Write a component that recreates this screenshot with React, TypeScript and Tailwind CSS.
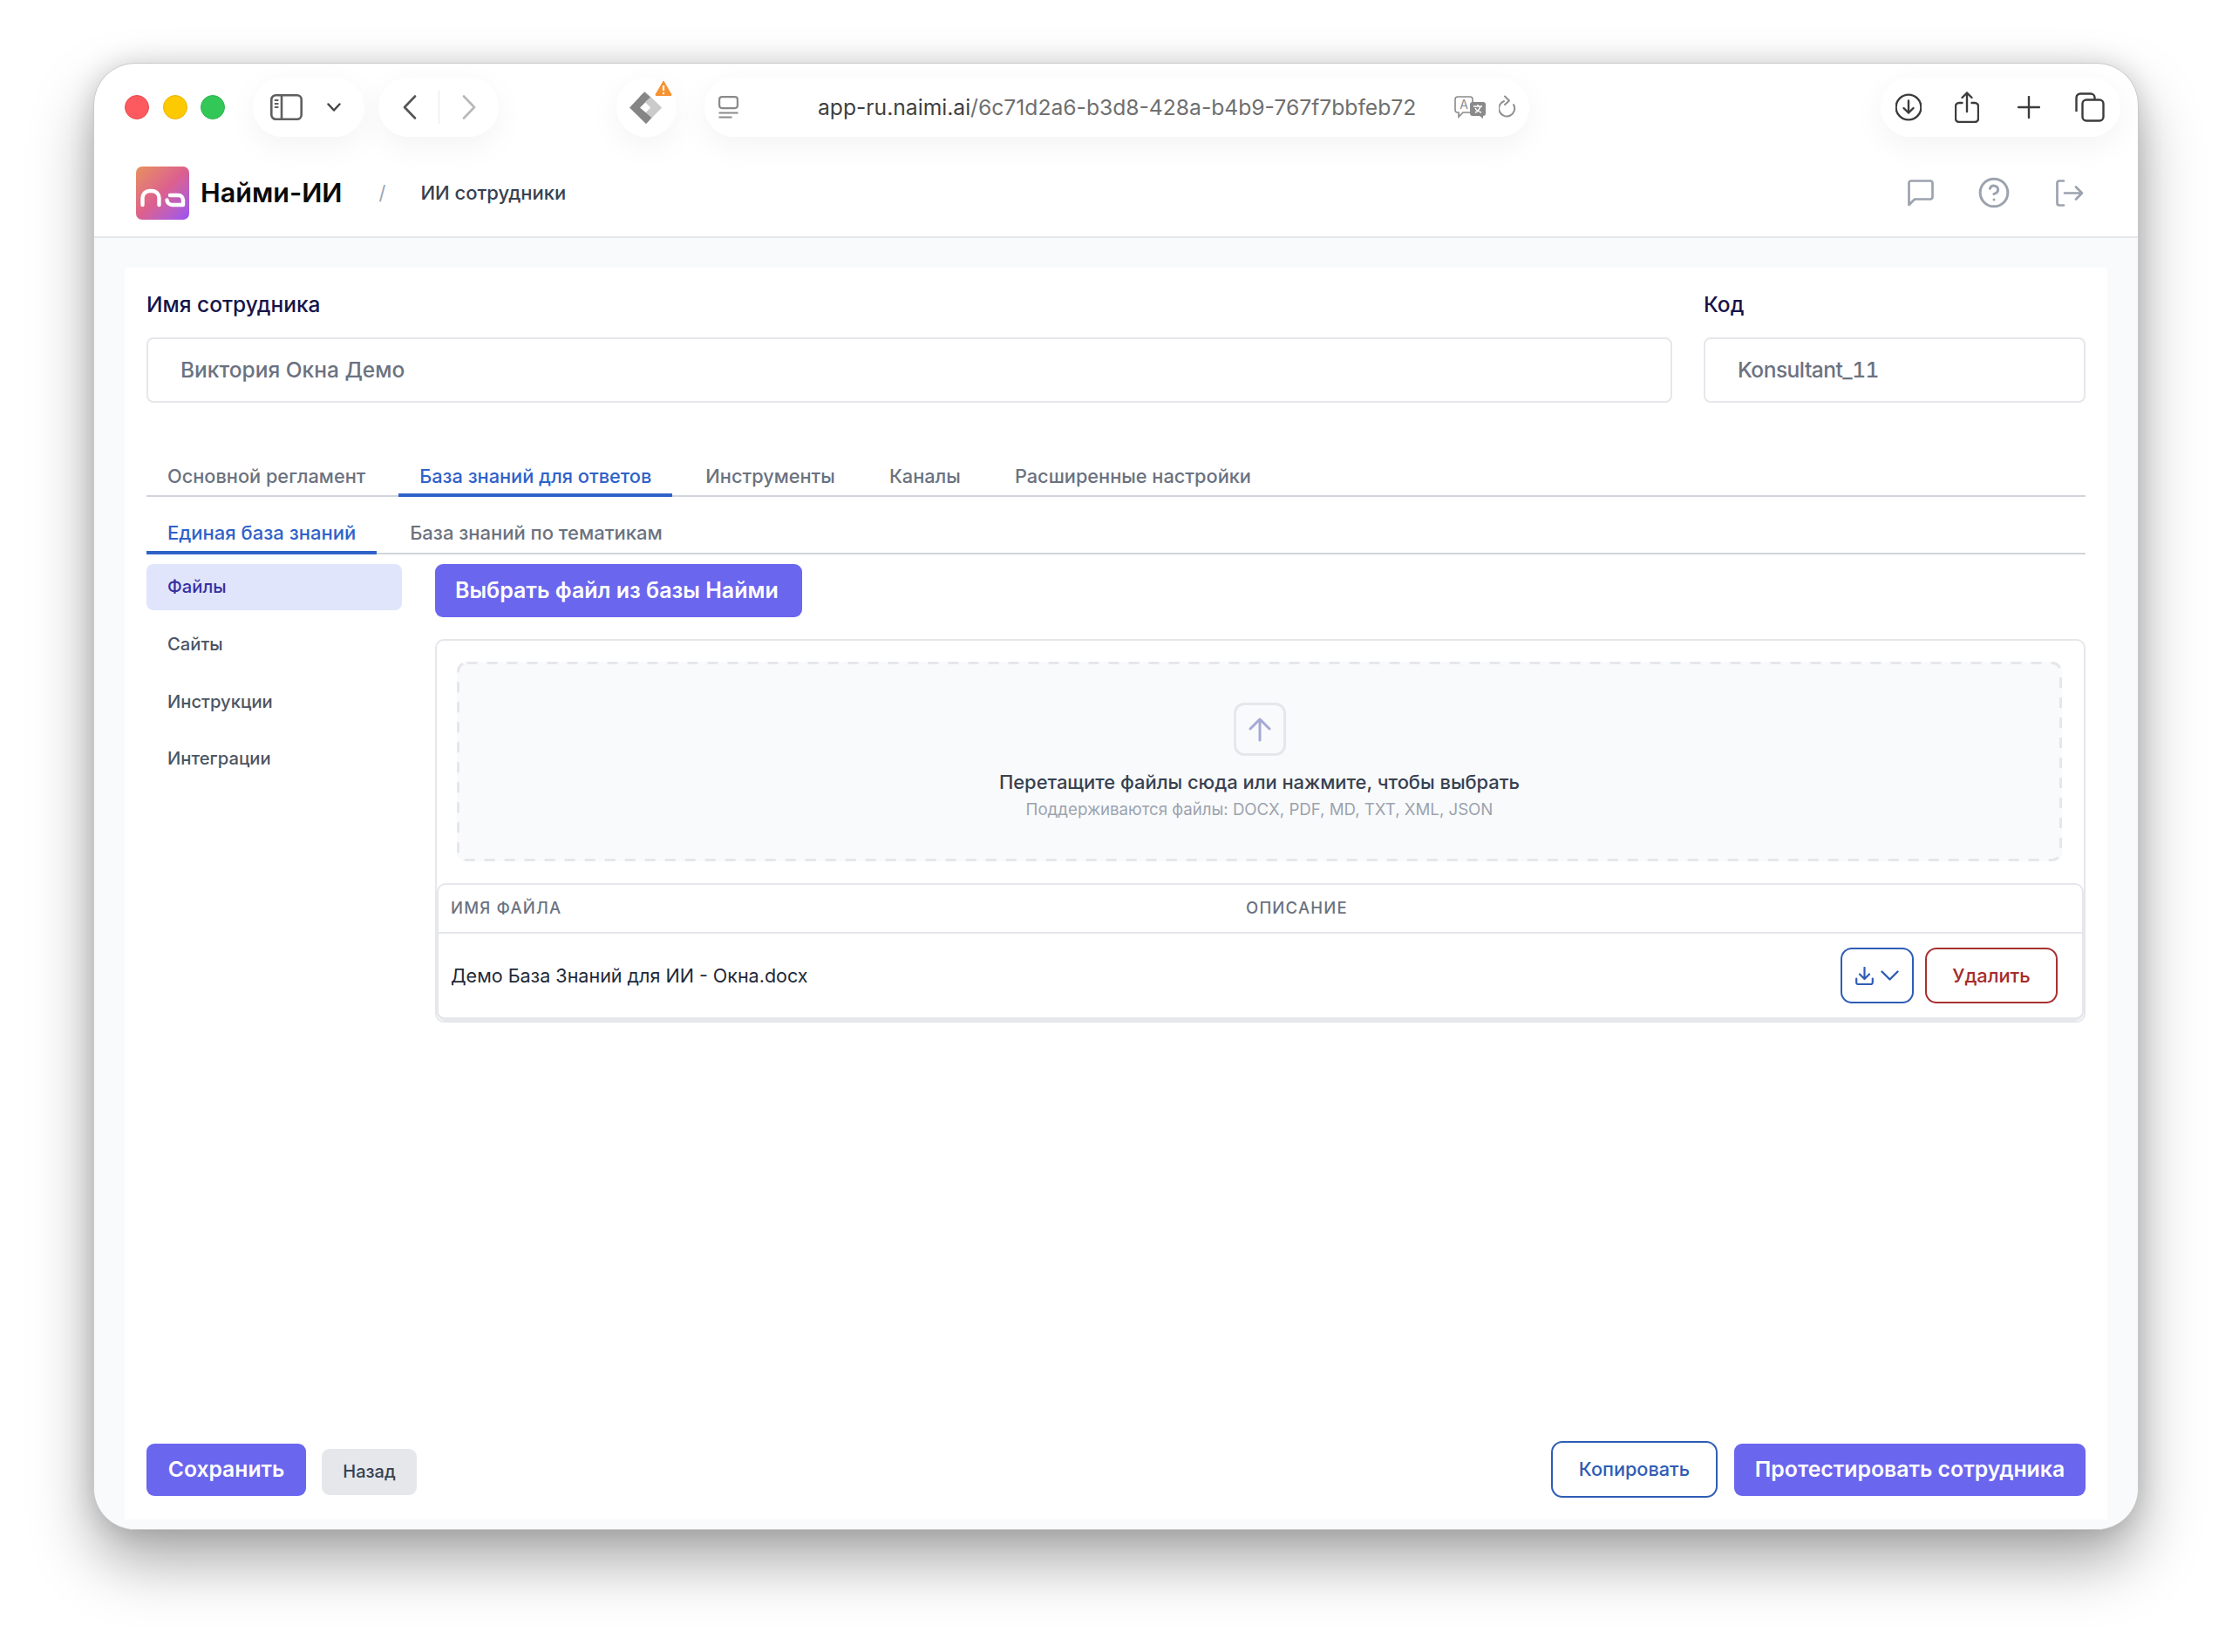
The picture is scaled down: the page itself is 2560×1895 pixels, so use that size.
import { CircleHelp } from "lucide-react"

const pill = "flex h-[68px] items-center rounded-[34px] bg-white shadow-[0_10px_36px_rgba(0,0,0,0.05)]"

function TrafficLights() {
    return (
        <div className="flex items-center gap-[15.5px]">
            <span className="h-[28px] w-[28px] rounded-full border border-[#e5484d] bg-[#fc5a5f]" />
            <span className="h-[28px] w-[28px] rounded-full border border-[#eab308] bg-[#fdc900]" />
            <span className="h-[28px] w-[28px] rounded-full border border-[#2eb350] bg-[#33c758]" />
        </div>
    )
}

function SidebarIcon() {
    return (
        <svg width="37" height="30" viewBox="0 0 37 30" fill="none" stroke="#5f5f5f" strokeWidth="2.6">
            <rect x="1.3" y="1.3" width="34.4" height="27.4" rx="5" />
            <path d="M13 1.3v27.4" />
            <path d="M4.8 7h4.6M4.8 11h4.6M4.8 15h4.6" strokeWidth="2" />
        </svg>
    )
}

function ExtensionIcon() {
    return (
        <div className="relative h-[37px] w-[37px]">
            <svg width="37" height="37" viewBox="0 0 37 37">
                <path d="M18 0 L37 18.5 L19 37 L12 30 L24.5 18.5 L18 12 L11.5 5.5 Z" fill="#cbcbcb" />
                <path d="M17 0.5 L0 18.5 L19 37 L25.5 30 L12 18.5 L24 6.5 Z" fill="#858585" />
                <path d="M24 6.5 L37 18.5 L25.5 30 L19 24 L24.5 18.5 L18 12 Z" fill="#cbcbcb" />
            </svg>
            <svg className="absolute -right-[12px] -top-[13px]" width="20" height="18" viewBox="0 0 20 18">
                <path d="M10 1 L19 16.5 Q19.3 17.5 18 17.5 L2 17.5 Q0.7 17.5 1 16.5 Z" fill="#f59231" stroke="#f59231" strokeLinejoin="round" />
                <path d="M10 6v6" stroke="#fff" strokeWidth="2.2" />
                <circle cx="10" cy="15" r="1.2" fill="#fff" />
            </svg>
        </div>
    )
}

function ReaderIcon() {
    return (
        <svg width="23" height="26" viewBox="0 0 23 26" fill="none" stroke="#8a8a8a" strokeWidth="2.2">
            <rect x="1.1" y="1.1" width="20.8" height="13" rx="3" />
            <path d="M0.5 19.5h22M0.5 24.5h15" />
        </svg>
    )
}

function TranslateIcon() {
    return (
        <svg width="37" height="26" viewBox="0 0 37 26" fill="none">
            <path d="M4 1h14a3 3 0 0 1 3 3v12a3 3 0 0 1-3 3H10l-5 5v-5H4a3 3 0 0 1-3-3V4a3 3 0 0 1 3-3z" stroke="#8a8a8a" strokeWidth="1.6" fill="#fff" />
            <text x="11" y="15" textAnchor="middle" fontSize="14" fontFamily="Inter, sans-serif" fill="#8a8a8a">A</text>
            <path d="M21 7h12a3 3 0 0 1 3 3v10a3 3 0 0 1-3 3v3l-4-3h-8a3 3 0 0 1-3-3V10a3 3 0 0 1 3-3z" fill="#8a8a8a" />
            <path d="M22 12h10M27 10v2M24 19c3-1 5-4 6-7M24 14c1 2 4 4 7 5" stroke="#fff" strokeWidth="1.5" />
        </svg>
    )
}

function ToolbarIcons() {
    return (
        <div className={`${pill} ml-auto w-[275px] pl-[17px]`}>
            <svg width="30" height="32" viewBox="0 0 30 32" fill="none" stroke="#3c3c3c" strokeWidth="2.4" strokeLinecap="round" strokeLinejoin="round">
                <circle cx="15" cy="16" r="14.4" />
                <path d="M15 8.5v14M9.5 17l5.5 5.5 5.5-5.5" />
            </svg>
            <svg className="ml-[38px]" width="28" height="36" viewBox="0 0 28 36" fill="none" stroke="#3c3c3c" strokeWidth="2.4" strokeLinecap="round" strokeLinejoin="round">
                <path d="M8.5 13H5a4 4 0 0 0-4 4v14a4 4 0 0 0 4 4h18a4 4 0 0 0 4-4V17a4 4 0 0 0-4-4h-3.500" />
                <path d="M14 23V1.500M8.500 7 14 1.500 19.500 7" />
            </svg>
            <svg className="ml-[44px]" width="26" height="26" viewBox="0 0 26 26" fill="none" stroke="#3c3c3c" strokeWidth="2.4" strokeLinecap="round">
                <path d="M13 1v24M1 13h24" />
            </svg>
            <svg className="ml-[40px]" width="34" height="34" viewBox="0 0 34 34" fill="none" stroke="#3c3c3c" strokeWidth="2.4" strokeLinejoin="round">
                <path d="M1.500 22V6a4.500 4.500 0 0 1 4.500-4.500h12A4.500 4.500 0 0 1 22.500 6v2" />
                <rect x="8.500" y="8.500" width="24" height="24" rx="4.500" fill="#fff" />
            </svg>
        </div>
    )
}

function Toolbar() {
    return (
        <div className="flex h-[98px] items-start pl-[35px] pr-[20px] pt-[16px]">
            <div className="flex h-[68px] items-center">
                <TrafficLights />
            </div>
            <div className={`${pill} ml-[32px] w-[128px] pl-[20px]`}>
                <SidebarIcon />
                <svg className="ml-[28px]" width="16" height="10" viewBox="0 0 16 10" fill="none" stroke="#444" strokeWidth="2.4" strokeLinecap="round" strokeLinejoin="round">
                    <path d="M1.500 1.500 8 8.500l6.500-7" />
                </svg>
            </div>
            <div className={`${pill} ml-[16px] w-[138px] pl-[28px]`}>
                <svg width="16" height="28" viewBox="0 0 16 28" fill="none" stroke="#555" strokeWidth="2.6" strokeLinecap="round" strokeLinejoin="round">
                    <path d="M14 1.500 2 14l12 12.500" />
                </svg>
                <span className="ml-[25px] h-[38px] w-px bg-[#e8e8e8]" />
                <svg className="ml-[26px]" width="16" height="28" viewBox="0 0 16 28" fill="none" stroke="#b8b8b8" strokeWidth="2.6" strokeLinecap="round" strokeLinejoin="round">
                    <path d="M2 1.500 14 14 2 26.500" />
                </svg>
            </div>
            <div className={`${pill} ml-[135px] w-[69px] justify-center pr-[3px]`}>
                <ExtensionIcon />
            </div>
            <div className={`${pill} ml-[32px] w-[946px] pl-[16px]`}>
                <ReaderIcon />
                <span className="ml-[91px] w-[685px] whitespace-nowrap text-[24.650px] leading-[34px] text-[#6f6f6f]">
                    <span className="text-[#3f3f3f]">app-ru.naimi.ai</span>/6c71d2a6-b3d8-428a-b4b9-767f7bbfeb72
                </span>
                <span className="ml-[45px] flex">
                    <TranslateIcon />
                </span>
                <svg className="ml-[14px]" width="20" height="28" viewBox="0 0 20 28" fill="none" stroke="#8f8f8f" strokeWidth="2" strokeLinecap="round" strokeLinejoin="round">
                    <path d="M6 7a9 9 0 1 0 11 4" />
                    <path d="M7 1.500 12 6.500 7 11" />
                </svg>
            </div>
            <ToolbarIcons />
        </div>
    )
}

function Logo() {
    return (
        <div className="h-[61px] w-[61px] rounded-[7px] bg-linear-to-br from-[#e8905a] via-[#dc5f8e] to-[#9c50f5]">
            <svg width="61" height="61" viewBox="0 0 61 61" fill="none" stroke="#fff" strokeWidth="4.400" strokeLinecap="round" strokeLinejoin="round">
                <path d="M7.500 44V36a8 8 0 0 1 8-8h3a8 8 0 0 1 8 8v8" />
                <path d="M39 33h9.500a5.500 5.500 0 0 1 5.500 5.500V44H41.500a6 6 0 0 1-6-5.500" />
            </svg>
        </div>
    )
}

function AppHeader() {
    return (
        <header className="flex h-[102px] items-center border-b-2 border-[#e5e7eb] pl-[48px] pr-[62px]">
            <Logo />
            <span className="ml-[13px] text-[30.500px] font-semibold leading-[40px] text-[#0a0a0a]">Найми-ИИ</span>
            <span className="ml-[42px] text-[22px] text-[#9ca3af]">/</span>
            <span className="ml-[40px] text-[22px] font-medium text-[#374151]">ИИ сотрудники</span>
            <div className="ml-auto flex items-center text-[#9ca3af]">
                <svg width="30" height="31" viewBox="0 0 30 31" fill="none" stroke="currentColor" strokeWidth="2.700" strokeLinejoin="round">
                    <path d="M1.500 29V4a2.500 2.500 0 0 1 2.500-2.500h22A2.500 2.500 0 0 1 28.500 4v16a2.500 2.500 0 0 1-2.500 2.500H8z" />
                </svg>
                <CircleHelp className="ml-[50px]" size={38} strokeWidth={1.9} />
                <svg className="ml-[52px]" width="32" height="31" viewBox="0 0 32 31" fill="none" stroke="currentColor" strokeWidth="2.700" strokeLinecap="round" strokeLinejoin="round">
                    <path d="M9 1.500H4A2.500 2.500 0 0 0 1.500 4v23A2.500 2.500 0 0 0 4 29.500h5" />
                    <path d="M10 15.500h20M23 8.500l7 7-7 7" />
                </svg>
            </div>
        </header>
    )
}

function Field({ label, value, className, valueClass }: { label: string; value: string; className: string; valueClass?: string }) {
    return (
        <div className={className}>
            <div className="mb-[22px] text-[24.500px] font-medium leading-[32px] text-[#16144a]">{label}</div>
            <div className="flex h-[75px] items-center rounded-[8px] border-2 border-[#e5e7eb] bg-white pl-[37px] text-[#6b7280]">
                <span className={`text-[24.500px] font-medium tabular-nums ${valueClass ?? ""}`}>{value}</span>
            </div>
        </div>
    )
}

function MainTabs() {
    const tabs = ["Основной регламент", "База знаний для ответов", "Инструменты", "Каналы", "Расширенные настройки"]
    return (
        <div className="mt-[56px] flex h-[52px] items-start gap-[14px] border-b-2 border-[#d1d5db]">
            {tabs.map((tab, i) => (
                <div
                    key={tab}
                    className={
                        i === 1
                            ? "h-[52px] border-b-4 border-[#2f62c9] px-[24px] pb-[3px] pt-[11px] text-[21.750px] font-medium leading-[34px] text-[#2f62c9]"
                            : "h-[52px] px-[24px] pb-[3px] pt-[11px] text-[21.750px] font-medium leading-[34px] text-[#6b7280]"
                    }
                >
                    {tab}
                </div>
            ))}
        </div>
    )
}

function SubTabs() {
    return (
        <div className="mt-[17px] flex h-[49px] items-start gap-[14px] border-b-2 border-[#d1d5db]">
            <div className="h-[49px] border-b-4 border-[#2f62c9] px-[24px] pb-[3px] pt-[7px] text-[22px] font-medium leading-[34px] text-[#2f62c9]">
                Единая база знаний
            </div>
            <div className="h-[49px] px-[24px] pb-[3px] pt-[7px] text-[22px] font-medium leading-[34px] text-[#6b7280]">
                База знаний по тематикам
            </div>
        </div>
    )
}

function SideMenu() {
    const items = ["Файлы", "Сайты", "Инструкции", "Интеграции"]
    return (
        <nav className="flex w-[293px] shrink-0 flex-col gap-[12.700px]">
            {items.map((item, i) => (
                <div
                    key={item}
                    className={
                        i === 0
                            ? "flex h-[53px] items-center rounded-[8px] bg-[#e0e5fc] pl-[24px] text-[20.200px] font-medium text-[#3730a3]"
                            : "flex h-[53px] items-center rounded-[8px] pl-[24px] text-[20.200px] font-medium text-[#4b5563]"
                    }
                >
                    {item}
                </div>
            ))}
        </nav>
    )
}

function DropZone() {
    return (
        <div className="relative ml-[23px] mr-[25px] mt-[24px] flex h-[229px] flex-col items-center rounded-[10px] bg-[#f9fafb] pt-[47px]">
            <svg className="absolute inset-0" width="1841" height="229" fill="none">
                <rect x="1.500" y="1.500" width="1838" height="226" rx="10" stroke="#e5e7eb" strokeWidth="3" strokeDasharray="12 11" />
            </svg>
            <div className="flex h-[61px] w-[60px] items-center justify-center rounded-[12px] border-[3px] border-[#e5e7eb]">
                <svg width="28" height="28" viewBox="0 0 28 28" fill="none" stroke="#a6a9d6" strokeWidth="3" strokeLinecap="round" strokeLinejoin="round">
                    <path d="M14 26V2M3 13 14 2l11 11" />
                </svg>
            </div>
            <div className="mt-[15px] text-[21.900px] font-medium leading-[30px] text-[#374151]">
                Перетащите файлы сюда или нажмите, чтобы выбрать
            </div>
            <div className="mt-[2px] text-[18.650px] leading-[28px] text-[#9ca3af]">
                Поддерживаются файлы: DOCX, PDF, MD, TXT, XML, JSON
            </div>
        </div>
    )
}

function FileTable() {
    return (
        <div className="mt-[25px] rounded-[10px] border-2 border-b-4 border-[#e5e7eb]">
            <div className="grid h-[56px] grid-cols-[912px_1fr] items-center border-b-2 border-[#e5e7eb] pl-[14px] text-[18.500px] font-medium uppercase tracking-[1.2px] text-[#6b7280]">
                <span>Имя файла</span>
                <span>Описание</span>
            </div>
            <div className="flex h-[96px] items-center justify-between pl-[14px] pr-[28px]">
                <span className="text-[21.500px] font-normal text-[#1f2937]">Демо База Знаний для ИИ - Окна.docx</span>
                <div className="flex items-center gap-[12.600px]">
                    <button className="flex h-[64px] w-[84px] items-center justify-center gap-[8px] rounded-[13px] border-2 border-[#2f5db5] text-[#2f5db5]">
                        <svg width="21" height="21" viewBox="0 0 21 21" fill="none" stroke="currentColor" strokeWidth="2.200" strokeLinecap="round" strokeLinejoin="round">
                            <path d="M10.500 1v12.500M5 8.500l5.500 5.500L16 8.500" />
                            <path d="M1.200 13.500v4.500a2 2 0 0 0 2 2h14.600a2 2 0 0 0 2-2v-4.500" />
                        </svg>
                        <svg width="21" height="12" viewBox="0 0 21 12" fill="none" stroke="currentColor" strokeWidth="2.400" strokeLinecap="round" strokeLinejoin="round">
                            <path d="M1.500 1.500 10.500 10.500 19.500 1.500" />
                        </svg>
                    </button>
                    <button className="h-[64px] w-[152px] rounded-[13px] border-2 border-[#a83232] text-[21.800px] font-medium text-[#a52c2c]">
                        Удалить
                    </button>
                </div>
            </div>
        </div>
    )
}

function Footer() {
    const primary = "flex h-[60px] items-center justify-center rounded-[9px] bg-[#6b66ee] font-semibold text-white"
    return (
        <div className="mt-auto flex h-[65px] items-center justify-between">
            <div className="flex items-center gap-[18px]">
                <button className={`${primary} w-[183px] text-[24.700px]`}>Сохранить</button>
                <button className="mt-[5px] h-[53px] w-[109px] rounded-[9px] bg-[#e5e7eb] text-[20px] font-medium text-[#374151]">
                    Назад
                </button>
            </div>
            <div className="flex items-center gap-[19px]">
                <button className="h-[65px] w-[191px] rounded-[13px] border-2 border-[#2f5db5] bg-white text-[21.700px] font-medium text-[#2f5db5]">
                    Копировать
                </button>
                <button className={`${primary} w-[403px] text-[24.800px]`}>Протестировать сотрудника</button>
            </div>
        </div>
    )
}

export default function App() {
    return (
        <div className="h-[1895px] w-[2560px] overflow-hidden bg-white pl-[107px] pt-[72px] font-['Inter',sans-serif]">
            <div className="flex h-[1683px] w-[2346px] flex-col overflow-hidden rounded-[48px] border border-[#c9c9c9] bg-white shadow-[0_36px_70px_rgba(0,0,0,0.34),0_0_30px_rgba(0,0,0,0.14)]">
                <Toolbar />
                <AppHeader />
                <div className="flex flex-1 flex-col bg-[#f9fafb] px-[35px] pb-[11px] pt-[34px]">
                    <main className="flex flex-1 flex-col bg-white px-[25px] pb-[25px] pt-[26px]">
                        <div className="flex gap-[36px]">
                            <Field label="Имя сотрудника" value="Виктория Окна Демо" className="flex-1" />
                            <Field label="Код" value="Konsultant_11" className="w-[438px]" valueClass="tracking-[-0.5px]" />
                        </div>
                        <MainTabs />
                        <SubTabs />
                        <div className="mt-[11px] flex gap-[38px]">
                            <SideMenu />
                            <div className="flex-1">
                                <button className="flex h-[61px] items-center rounded-[9px] bg-[#6b66ee] pl-[23px] pr-[27px] text-[25px] font-semibold text-white">
                                    Выбрать файл из базы Найми
                                </button>
                                <div className="mt-[25px] rounded-[10px] border-2 border-[#e5e7eb]">
                                    <DropZone />
                                    <FileTable />
                                </div>
                            </div>
                        </div>
                        <Footer />
                    </main>
                </div>
            </div>
        </div>
    )
}
